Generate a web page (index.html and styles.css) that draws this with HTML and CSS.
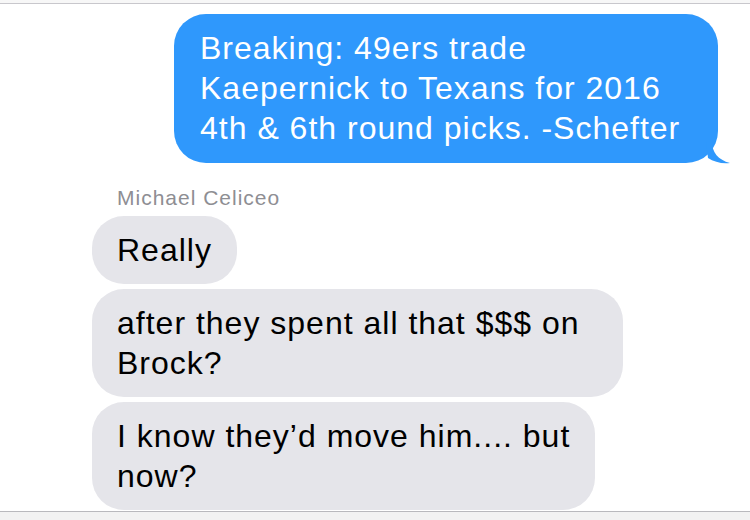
FILE: index.html
```html
<!DOCTYPE html>
<html>
<head>
<meta charset="utf-8">
<link rel="stylesheet" href="styles.css">
</head>
<body>
<div class="topline"></div>
<div class="thread">
	<div class="row sent">
		<div class="bubble blue">
			Breaking: 49ers trade<br>Kaepernick to Texans for 2016<br>4th &amp; 6th round picks. -Schefter
			<svg class="tail" width="24" height="22" viewBox="0 0 24 22">
				<path d="M0 0 L6 0 C6 10 12 18 24 21 C16 22 8 20 2 16 Z" fill="#2f98fc"/>
			</svg>
		</div>
	</div>
	<div class="sender">Michael Celiceo</div>
	<div class="row received">
		<div class="bubble gray">Really</div>
		<div class="bubble gray">after they spent all that $$$ on Brock?</div>
		<div class="bubble gray">I know they’d move him.... but<br>now?</div>
	</div>
</div>
<div class="bottombar"></div>
</body>
</html>
```

FILE: styles.css
```css
body {
	margin: 0;
	background-color: #ffffff;
	font-family: "Liberation Sans", Arial, sans-serif;
	height: 520px;
	overflow: hidden;
	display: flex;
	flex-direction: column;
}
.topline {
	height: 3px;
	border-bottom: 1px solid #c8c7cc;
	background-color: #f7f7f7;
}
.thread {
	flex: 1;
	padding-top: 10px;
	display: flex;
	flex-direction: column;
	overflow: hidden;
}
.row {
	display: flex;
	flex-direction: column;
}
.row.sent {
	align-items: flex-end;
	padding-right: 32px;
}
.row.received {
	align-items: flex-start;
	padding-left: 92px;
	gap: 5px;
}
.bubble {
	position: relative;
	font-size: 32px;
	letter-spacing: 1px;
	line-height: 40px;
	padding: 14px 25px;
	border-radius: 32px;
	box-sizing: border-box;
}
.bubble.blue {
	background-color: #2f98fc;
	color: #ffffff;
	width: 544px;
	padding: 14px 20px 15px 26px;
	white-space: nowrap;
}
.bubble.gray {
	background-color: #e5e5ea;
	color: #000000;
	max-width: 531px;
}
.tail {
	position: absolute;
	right: -12px;
	bottom: -1px;
}
.sender {
	font-size: 21px;
	line-height: 24px;
	letter-spacing: 1px;
	color: #8e8e93;
	padding-left: 117px;
	margin-top: 23px;
	margin-bottom: 6px;
}
.bottombar {
	height: 8px;
	border-top: 1px solid #b9b9bd;
	background-color: #f2f2f2;
}
```
